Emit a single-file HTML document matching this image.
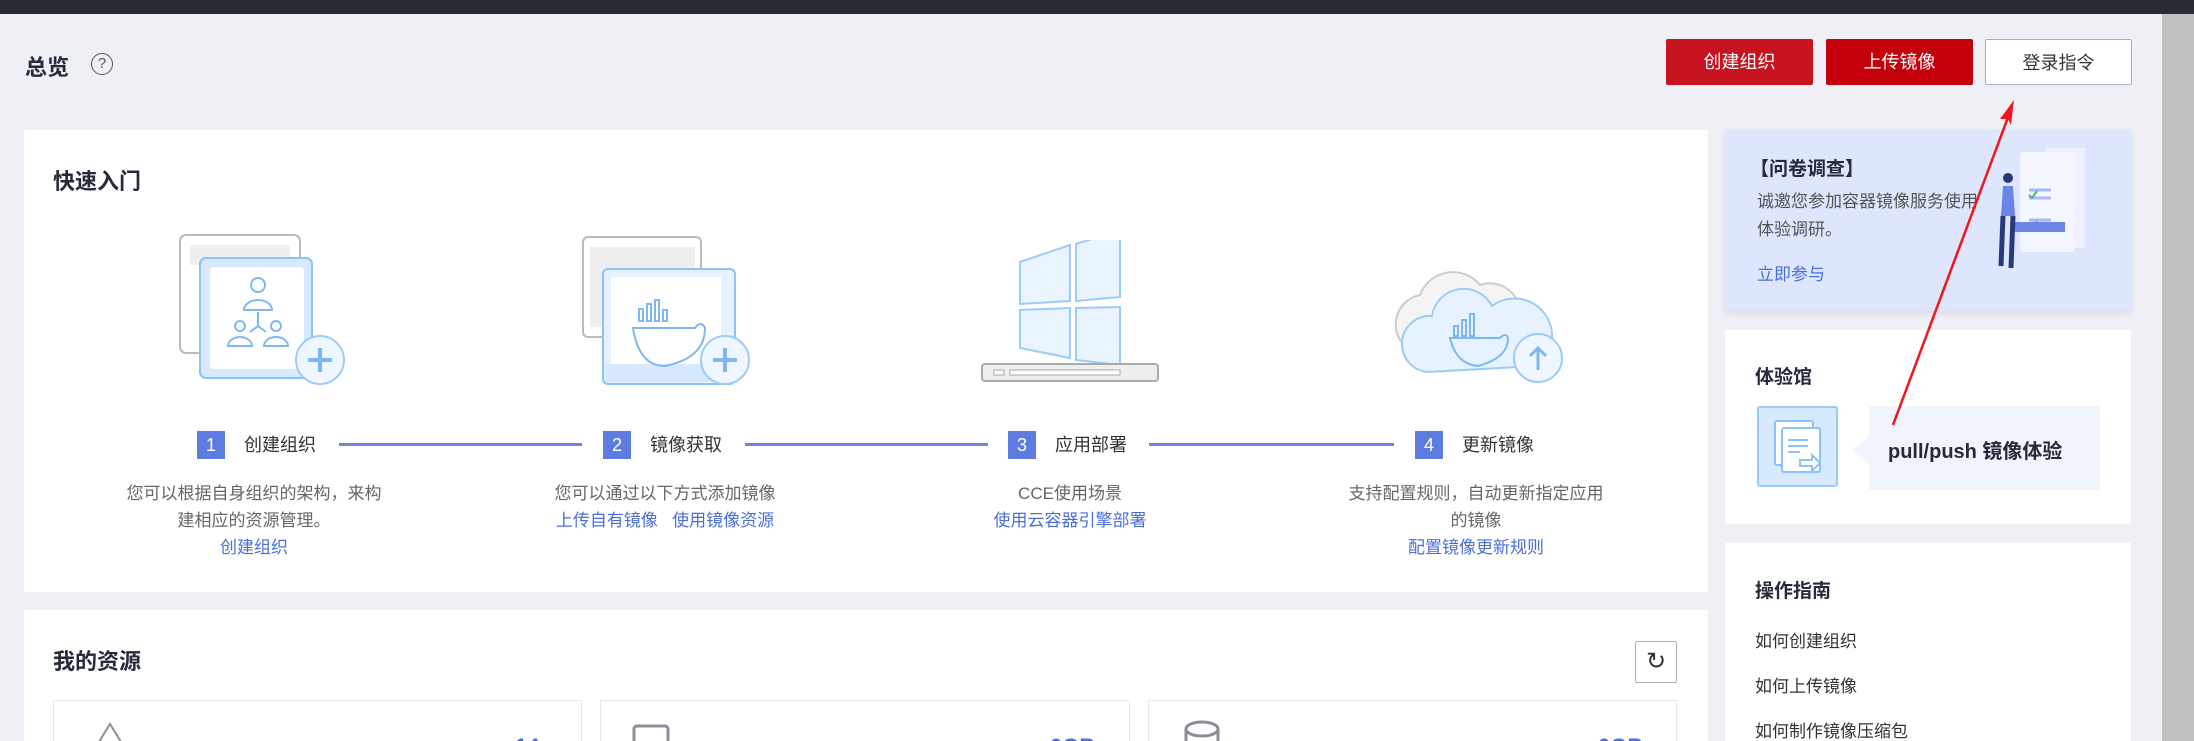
<!DOCTYPE html>
<html><head><meta charset="utf-8"><style>
*{margin:0;padding:0;box-sizing:border-box}
html,body{width:2194px;height:741px;overflow:hidden}
body{background:#eef0f5;font-family:"Liberation Sans","Noto Sans CJK SC",sans-serif;position:relative;color:#252b3a}
.a{position:absolute}
.card{position:absolute;background:#fff}
.btn{position:absolute;top:39px;height:46px;width:147px;font-size:18px;text-align:center;line-height:46px;border-radius:2px}
.num{position:absolute;top:431px;width:28px;height:28px;background:#5e7ce0;color:#fff;font-size:18px;text-align:center;line-height:28px}
.lbl{position:absolute;top:431px;font-size:18px;line-height:28px;color:#333}
.line{position:absolute;top:443px;height:3px;background:#6b84e6}
.desc{position:absolute;top:480px;width:340px;text-align:center;font-size:17px;line-height:27px;color:#666}
.desc a{color:#4a6ee0;text-decoration:none}
.t{font-weight:bold;color:#252b3a}
.lk{position:absolute;left:1755px;font-size:17px;color:#333}
</style></head><body>
<div class="a" style="left:0;top:0;width:2194px;height:14px;background:#262a33"></div>
<div class="a" style="left:2162px;top:14px;width:32px;height:727px;background:#c1c1c1"></div>

<div class="a t" style="left:25px;top:50px;font-size:22px">总览</div>
<div class="a" style="left:91px;top:53px;width:22px;height:22px;border:1.6px solid #555;border-radius:50%;font-size:15px;text-align:center;line-height:19px;color:#555">?</div>

<div class="btn" style="left:1666px;background:#c7131f;color:#fff">创建组织</div>
<div class="btn" style="left:1826px;background:#c4000a;color:#fff">上传镜像</div>
<div class="btn" style="left:1985px;background:#fff;border:1px solid #a5acc8;color:#333">登录指令</div>

<div class="card" style="left:24px;top:130px;width:1684px;height:462px"></div>
<div class="a t" style="left:53px;top:164px;font-size:22px">快速入门</div>

<svg class="a" style="left:170px;top:230px" width="180" height="170" viewBox="0 0 180 170">
<rect x="10" y="5" width="120" height="118" rx="6" fill="#fff" stroke="#bbb" stroke-width="2"/>
<rect x="20" y="15" width="100" height="20" fill="#eee"/>
<rect x="30" y="28" width="112" height="120" rx="6" fill="#d6e9ff" stroke="#8cc2fb" stroke-width="2"/>
<rect x="40" y="37" width="94" height="102" rx="4" fill="#fff"/>
<g fill="none" stroke="#7db8f5" stroke-width="2"><circle cx="88" cy="55" r="7"/><path d="M74 80a14 10 0 0 1 28 0z"/><circle cx="70" cy="96" r="5"/><circle cx="106" cy="96" r="5"/><path d="M58 116a12 9 0 0 1 24 0zM94 116a12 9 0 0 1 24 0zM88 82v14l-8 6M88 96l8 6"/></g>
<circle cx="150" cy="130" r="24" fill="#eef6ff" stroke="#9ccbfa" stroke-width="2"/>
<path d="M150 118v24M138 130h24" stroke="#7db8f5" stroke-width="4"/>
</svg>
<svg class="a" style="left:575px;top:232px" width="190" height="165" viewBox="0 0 190 165">
<rect x="8" y="5" width="118" height="100" rx="5" fill="#fff" stroke="#bbb" stroke-width="2"/>
<rect x="15" y="15" width="105" height="80" fill="#eee"/>
<rect x="28" y="37" width="132" height="115" rx="5" fill="#e6f2ff" stroke="#8cc2fb" stroke-width="2"/>
<rect x="36" y="45" width="110" height="88" fill="#fff"/>
<path d="M30 132h120v18H30z" fill="#d6e9ff"/>
<g fill="none" stroke="#7db8f5" stroke-width="2"><path d="M58 96h62q6-8 10 0 0 30-40 38-26 0-32-38z"/><rect x="64" y="77" width="4" height="12"/><rect x="72" y="72" width="4" height="17"/><rect x="80" y="68" width="4" height="21"/><rect x="88" y="78" width="4" height="11"/></g>
<circle cx="150" cy="128" r="24" fill="#eef6ff" stroke="#9ccbfa" stroke-width="2"/>
<path d="M150 116v24M138 128h24" stroke="#7db8f5" stroke-width="4"/>
</svg>
<svg class="a" style="left:978px;top:240px" width="185" height="150" viewBox="0 0 185 150">
<g fill="#eaf4ff" stroke="#9ccbfa" stroke-width="2"><path d="M42 22l50-17v56l-50 3z"/><path d="M98 4l44-14v67l-44 4z"/><path d="M42 70l50-2v50l-50-10z"/><path d="M98 68l44-1v58l-44-5z"/></g>
<rect x="4" y="124" width="176" height="17" rx="3" fill="#eee" stroke="#aaa" stroke-width="2"/>
<rect x="16" y="130" width="10" height="5" fill="#fff" stroke="#aaa"/><rect x="32" y="130" width="110" height="5" fill="#fff" stroke="#aaa"/>
</svg>
<svg class="a" style="left:1380px;top:250px" width="200" height="145" viewBox="0 0 200 145">
<path d="M30 100a30 30 0 0 1 10-55 35 35 0 0 1 60-10 30 30 0 0 1 40 30v35z" fill="#f4f4f4" stroke="#ccc" stroke-width="2"/>
<path d="M48 122a28 28 0 0 1 4-56 32 32 0 0 1 60-10 30 30 0 0 1 45 60z" fill="#e6f2ff" stroke="#9ccbfa" stroke-width="2"/>
<g fill="none" stroke="#7db8f5" stroke-width="2"><path d="M70 88h50q6-6 8 0 0 20-30 28-22-2-28-28z"/><rect x="74" y="76" width="4" height="10"/><rect x="82" y="70" width="4" height="16"/><rect x="90" y="64" width="4" height="22"/></g>
<circle cx="158" cy="108" r="24" fill="#eef6ff" stroke="#9ccbfa" stroke-width="2"/>
<path d="M158 120v-22M150 106l8-8 8 8" fill="none" stroke="#7db8f5" stroke-width="3"/>
</svg>

<div class="num" style="left:197px">1</div><div class="lbl" style="left:244px">创建组织</div>
<div class="line" style="left:339px;width:243px"></div>
<div class="num" style="left:603px">2</div><div class="lbl" style="left:650px">镜像获取</div>
<div class="line" style="left:745px;width:243px"></div>
<div class="num" style="left:1008px">3</div><div class="lbl" style="left:1055px">应用部署</div>
<div class="line" style="left:1149px;width:245px"></div>
<div class="num" style="left:1415px">4</div><div class="lbl" style="left:1462px">更新镜像</div>

<div class="desc" style="left:84px">您可以根据自身组织的架构，来构<br>建相应的资源管理。<br><a>创建组织</a></div>
<div class="desc" style="left:495px">您可以通过以下方式添加镜像<br><a>上传自有镜像</a>&nbsp;&nbsp;&nbsp;<a>使用镜像资源</a></div>
<div class="desc" style="left:900px">CCE使用场景<br><a>使用云容器引擎部署</a></div>
<div class="desc" style="left:1306px">支持配置规则，自动更新指定应用<br>的镜像<br><a>配置镜像更新规则</a></div>

<div class="card" style="left:24px;top:610px;width:1684px;height:140px"></div>
<div class="a t" style="left:53px;top:644px;font-size:22px">我的资源</div>
<div class="a" style="left:1635px;top:641px;width:42px;height:42px;border:1px solid #adb0b8;border-radius:2px;font-size:24px;text-align:center;line-height:40px;color:#333">↻</div>
<div class="a" style="left:53px;top:700px;width:529px;height:60px;border:1px solid #e8e8ec"></div>
<div class="a" style="left:600px;top:700px;width:530px;height:60px;border:1px solid #e8e8ec"></div>
<div class="a" style="left:1148px;top:700px;width:529px;height:60px;border:1px solid #e8e8ec"></div>
<svg class="a" style="left:90px;top:720px" width="40" height="30"><path d="M4 30L20 4l16 26" fill="none" stroke="#8a8e99" stroke-width="2"/></svg>
<svg class="a" style="left:632px;top:724px" width="40" height="25"><rect x="2" y="2" width="34" height="30" rx="3" fill="none" stroke="#8a8e99" stroke-width="3"/></svg>
<svg class="a" style="left:1182px;top:720px" width="40" height="30"><ellipse cx="20" cy="9" rx="16" ry="7" fill="none" stroke="#8a8e99" stroke-width="3"/><path d="M4 9v30M36 9v30" stroke="#8a8e99" stroke-width="3"/></svg>
<div class="a" style="left:280px;top:738px;font-size:18px;color:#4a6ee0">镜像</div>
<div class="a" style="left:784px;top:738px;font-size:18px;color:#333">公网下行流量</div>
<div class="a" style="left:1352px;top:738px;font-size:18px;color:#333">存储容量</div>
<div class="a" style="left:515px;top:734px;font-size:22px;font-weight:bold;color:#4a6ee0">14</div>
<div class="a" style="left:1050px;top:734px;font-size:22px;font-weight:bold;color:#4a6ee0">0GB</div>
<div class="a" style="left:1598px;top:734px;font-size:22px;font-weight:bold;color:#4a6ee0">0GB</div>

<div class="card" style="left:1725px;top:130px;width:406px;height:181px;background:#dde6fd;box-shadow:0 2px 6px rgba(0,0,0,.1)"></div>
<div class="a t" style="left:1750px;top:154px;font-size:19px">【问卷调查】</div>
<div class="a" style="left:1757px;top:188px;font-size:17px;line-height:28px;color:#555;width:240px">诚邀您参加容器镜像服务使用<br>体验调研。</div>
<div class="a" style="left:1757px;top:260px;font-size:17px;color:#4a6ee0">立即参与</div>
<svg class="a" style="left:1985px;top:140px" width="120" height="140">
<rect x="60" y="8" width="40" height="100" fill="#eef2ff"/><rect x="35" y="12" width="55" height="100" rx="4" fill="#f4f6ff"/>
<path d="M44 50h22M44 58h22M44 80h22M44 88h22" stroke="#a9b8f5" stroke-width="3"/>
<path d="M44 55l3 3 5-7M44 85l3 3 5-7" stroke="#3cbf7a" stroke-width="2" fill="none"/>
<rect x="30" y="82" width="50" height="10" fill="#6b84e6"/>
<circle cx="23" cy="38" r="5" fill="#253a7a"/><path d="M18 46h10l2 30h-14z" fill="#6b84e6"/><path d="M18 76l-2 50M28 76l-2 52" stroke="#253a7a" stroke-width="5"/>
</svg>

<div class="card" style="left:1725px;top:330px;width:406px;height:194px"></div>
<div class="a t" style="left:1755px;top:362px;font-size:19px">体验馆</div>
<div class="a" style="left:1757px;top:406px;width:81px;height:81px;background:#d6e9ff;border:2px solid #9ccbfa;border-radius:3px"></div>
<svg class="a" style="left:1770px;top:418px" width="60" height="60"><g fill="#fff" stroke="#8cc2fb" stroke-width="2"><rect x="5" y="3" width="38" height="44" rx="2"/><rect x="12" y="10" width="38" height="44" rx="2"/></g><path d="M18 22h20M18 28h20M18 34h12" stroke="#8cc2fb" stroke-width="2"/><path d="M30 42h12v-5l8 8-8 8v-5H30z" fill="#fff" stroke="#8cc2fb" stroke-width="2"/></svg>
<div class="a" style="left:1869px;top:406px;width:231px;height:84px;background:#f0f4fd"></div>
<div class="a" style="left:1852px;top:436px;width:0;height:0;border:14px solid transparent;border-right:17px solid #f0f4fd;border-left:0"></div>
<div class="a t" style="left:1888px;top:435px;font-size:20px">pull/push 镜像体验</div>

<div class="card" style="left:1725px;top:543px;width:406px;height:210px"></div>
<div class="a t" style="left:1755px;top:576px;font-size:19px">操作指南</div>
<div class="lk" style="top:627px">如何创建组织</div>
<div class="lk" style="top:672px">如何上传镜像</div>
<div class="lk" style="top:717px">如何制作镜像压缩包</div>

<svg class="a" style="left:0;top:0" width="2194" height="741"><line x1="1893" y1="425" x2="2010" y2="112" stroke="#f5141a" stroke-width="2.5"/><path d="M2014 100l-14 19 8 0 3 6z" fill="#f5141a"/></svg>
</body></html>
